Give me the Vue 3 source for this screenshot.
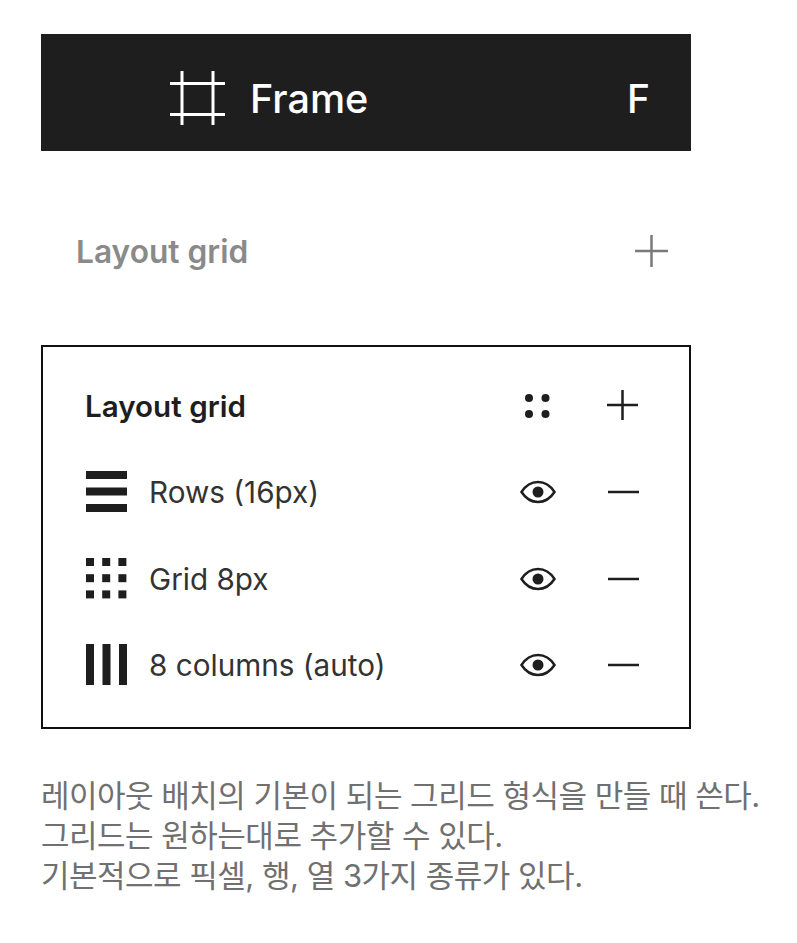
<script setup>
const rows = [
  { id: 'rows', label: 'Rows (16px)' },
  { id: 'grid', label: 'Grid 8px' },
  { id: 'cols', label: '8 columns (auto)' },
]
const dots = [0, 1, 2].flatMap(y => [0, 1, 2].map(x => ({ x: x * 16.2, y: y * 16.2 })))
</script>

<template>
  <main class="page">
    <header class="bar">
      <svg class="frame-icon" width="56" height="56" viewBox="0 0 56 56" aria-hidden="true">
        <path d="M12 0V54M43 0V54M0 12.500H55M0 43.500H55" stroke="#fff" stroke-width="3" fill="none" />
      </svg>
      <span class="bar-label">Frame</span>
      <span class="bar-key">F</span>
    </header>

    <section class="collapsed">
      <h2 class="collapsed-title">Layout grid</h2>
      <svg width="34" height="32" viewBox="0 0 34 32" aria-hidden="true">
        <path d="M0 16H33M16.500 0V32" stroke="#7a7a7a" stroke-width="2.500" fill="none" />
      </svg>
    </section>

    <section class="panel">
      <div class="panel-head">
        <h2 class="panel-title">Layout grid</h2>
        <svg class="slot-a head-icon" width="28" height="28" viewBox="0 0 28 28" aria-hidden="true">
          <circle cx="6" cy="7" r="4" fill="#1e1e1e" />
          <circle cx="22.500" cy="7" r="4" fill="#1e1e1e" />
          <circle cx="6" cy="23" r="4" fill="#1e1e1e" />
          <circle cx="22.500" cy="23" r="4" fill="#1e1e1e" />
        </svg>
        <svg class="slot-b head-icon" width="32" height="32" viewBox="0 0 32 32" aria-hidden="true">
          <path d="M0 16H31M15.500 1V31" stroke="#1e1e1e" stroke-width="2.500" fill="none" />
        </svg>
      </div>
      <div v-for="row in rows" :key="row.id" class="row">
        <svg class="type-icon" width="42" height="42" viewBox="0 0 42 42" aria-hidden="true">
          <g v-if="row.id === 'rows'" fill="#1e1e1e">
            <rect x="0" y="0" width="41" height="8" />
            <rect x="0" y="16.500" width="41" height="8" />
            <rect x="0" y="33" width="41" height="8" />
          </g>
          <g v-else-if="row.id === 'grid'" fill="#1e1e1e">
            <rect v-for="(d, i) in dots" :key="i" :x="d.x" :y="d.y" width="8" height="8" />
          </g>
          <g v-else fill="#1e1e1e">
            <rect x="0" y="0" width="8" height="41" />
            <rect x="16.500" y="0" width="8" height="41" />
            <rect x="33" y="0" width="8" height="41" />
          </g>
        </svg>
        <span class="row-label">{{ row.label }}</span>
        <svg class="slot-a eye" width="36" height="24" viewBox="0 0 36 24" aria-hidden="true">
          <path d="M1.500 12C6 5 11.500 2 18 2s12 3 16.500 10C30 19 24.500 22 18 22S6 19 1.500 12Z" fill="none" stroke="#1e1e1e" stroke-width="2.500" />
          <circle cx="18" cy="12" r="5.500" fill="#1e1e1e" />
        </svg>
        <svg class="slot-b" width="32" height="32" viewBox="0 0 32 32" aria-hidden="true">
          <path d="M0 16H31" stroke="#1e1e1e" stroke-width="2.500" fill="none" />
        </svg>
      </div>
    </section>

    <p class="note">레이아웃 배치의 기본이 되는 그리드 형식을 만들 때 쓴다.<br />그리드는 원하는대로 추가할 수 있다.<br />기본적으로 픽셀, 행, 열 3가지 종류가 있다.</p>
  </main>
</template>

<style scoped>
.page {
  width: 797px;
  height: 943px;
  box-sizing: border-box;
  padding: 34px 0 0 41px;
  background: #fff;
  font-family: Inter, "Noto Sans CJK KR", sans-serif;
  overflow: hidden;
}
.bar {
  width: 650px;
  height: 117px;
  box-sizing: border-box;
  padding: 12px 41px 0 129px;
  display: flex;
  align-items: center;
  background: #1e1e1e;
  color: #fff;
}
.bar-label {
  margin-left: 24px;
  font-size: 39.600px;
  font-weight: 500;
  line-height: 44px;
  flex: 1;
}
.bar-key {
  font-size: 39px;
  font-weight: 500;
  line-height: 44px;
}
.collapsed {
  width: 650px;
  height: 194px;
  box-sizing: border-box;
  padding: 6px 22px 0 35px;
  display: flex;
  align-items: center;
  justify-content: space-between;
}
.collapsed-title {
  margin: 0;
  font-size: 31.700px;
  font-weight: 600;
  color: #8a8a8a;
}
.panel {
  width: 650px;
  height: 384px;
  margin-top: -0.500px;
  box-sizing: border-box;
  border: 2px solid #111;
  padding: 16px 0 0 42px;
}
.panel-head,
.row {
  height: 86.500px;
  display: flex;
  align-items: center;
}
.panel-title {
  margin: 0;
  width: 438px;
  font-size: 29.600px;
  font-weight: 600;
  color: #1e1e1e;
}
.head-icon {
  margin-bottom: 2px;
}
.type-icon {
  width: 42px;
  margin-left: 0.700px;
}
.row-label {
  margin-left: 21.300px;
  width: 372px;
  font-size: 29.700px;
  color: #333;
}
.slot-a {
  flex: none;
  margin-right: 54px;
}
.panel-head .slot-a {
  margin-right: 56px;
}
.eye {
  margin-left: -1px;
  margin-right: 52px;
}
.note {
  margin: 47.500px 0 0;
  font-family: Inter, "Noto Sans CJK KR", sans-serif;
  font-size: 31px;
  font-weight: 400;
  line-height: 40px;
  letter-spacing: -0.500px;
  color: #707070;
  white-space: nowrap;
}
</style>
